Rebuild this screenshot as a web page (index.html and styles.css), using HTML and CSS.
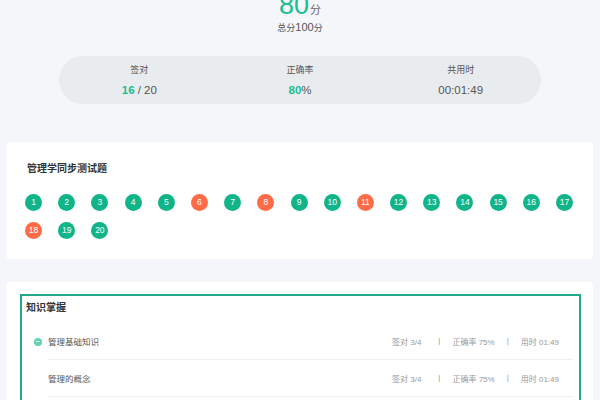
FILE: index.html
```html
<!DOCTYPE html>
<html lang="zh">
<head>
<meta charset="utf-8">
<title>成绩</title>
<link rel="stylesheet" href="styles.css">
</head>
<body>
<div class="head">
  <div class="score"><span class="num">80</span><span class="unit">分</span></div>
  <div class="total"><span class="sm">总分</span>100<span class="sm">分</span></div>
</div>
<div class="pill">
  <div class="stat"><div class="lbl">签对</div><div class="val"><b class="g">16</b> / 20</div></div>
  <div class="stat"><div class="lbl">正确率</div><div class="val"><b class="g">80</b>%</div></div>
  <div class="stat"><div class="lbl">共用时</div><div class="val">00:01:49</div></div>
</div>
<div class="card card-q">
  <div class="title">管理学同步测试题</div>
  <div class="dots">
    <span class="dot">1</span><span class="dot">2</span><span class="dot">3</span><span class="dot">4</span><span class="dot">5</span><span class="dot bad">6</span><span class="dot">7</span><span class="dot bad">8</span><span class="dot">9</span><span class="dot">10</span><span class="dot bad">11</span><span class="dot">12</span><span class="dot">13</span><span class="dot">14</span><span class="dot">15</span><span class="dot">16</span><span class="dot">17</span><span class="dot bad">18</span><span class="dot">19</span><span class="dot">20</span>
  </div>
</div>
<div class="card card-k">
  <div class="box">
    <div class="title k-title">知识掌握</div>
    <div class="row">
      <div class="gut"><span class="minus"></span></div>
      <div class="line"><span class="name">管理基础知识</span><span class="meta"><span>签对 3/4</span><span class="pipe">|</span><span>正确率 75%</span><span class="pipe">|</span><span>用时 01:49</span></span></div>
    </div>
    <div class="row">
      <div class="gut"></div>
      <div class="line"><span class="name">管理的概念</span><span class="meta"><span>签对 3/4</span><span class="pipe">|</span><span>正确率 75%</span><span class="pipe">|</span><span>用时 01:49</span></span></div>
    </div>
  </div>
</div>
</body>
</html>
```
FILE: styles.css
```css
* { box-sizing: border-box; }
html, body { margin: 0; padding: 0; }
body {
  background: #f5f6fa;
  font-family: "Liberation Sans", "Noto Sans CJK SC", sans-serif;
  color: #333;
  overflow: hidden;
}
.head { text-align: center; }
.score {
  margin-top: -8px;
  height: 27px;
  line-height: 27px;
  color: #17bf8f;
}
.score .num { font-size: 27px; }
.score .unit { font-size: 11px; color: #666; margin-left: 1px; }
.total {
  margin-top: 1px;
  font-size: 11px;
  line-height: 14px;
  color: #555;
}
.total .sm { font-size: 9px; }
.pill {
  margin: 21px 59px 0;
  height: 48px;
  border-radius: 24px;
  background: #e9ecef;
  display: flex;
  padding: 8px 0 7px;
}
.stat { flex: 1; text-align: center; }
.lbl { font-size: 9px; line-height: 12px; color: #555; }
.val { margin-top: 7px; font-size: 11.5px; line-height: 14px; color: #555; }
.val .g { color: #17bf8f; font-weight: bold; }
.card {
  background: #fff;
  border-radius: 4px;
  margin: 0 7px 0 6px;
}
.card-q { margin-top: 38px; padding: 20px 19px 20px; }
.title { font-size: 10px; line-height: 14px; font-weight: bold; color: #333; }
.card-q .title { margin-left: 2px; }
.dots {
  margin-top: 18px;
  display: flex;
  flex-wrap: wrap;
  column-gap: 16.2px;
  row-gap: 11px;
}
.dot {
  width: 17px;
  height: 17px;
  border-radius: 50%;
  background: #10b489;
  color: #fff;
  font-size: 8.5px;
  line-height: 17px;
  text-align: center;
}
.dot.bad { background: #ff6b47; }
.card-k { margin-top: 23px; padding: 12px 12px 0 14px; }
.box {
  border: 2px solid #23a889;
  border-bottom: none;
  padding: 5px 6px 30px 4px;
}
.k-title { margin-bottom: 8px; }
.row { display: flex; margin-left: -4px; }
.gut {
  width: 26px;
  flex: none;
  display: flex;
  align-items: center;
  justify-content: center;
  padding-left: 5px;
}
.minus {
  width: 8px;
  height: 8px;
  border-radius: 50%;
  background: #5fd4b0;
  position: relative;
  display: block;
}
.minus::after {
  content: "";
  position: absolute;
  left: 2px;
  top: 3.5px;
  width: 4px;
  height: 1px;
  background: #fff;
}
.line {
  flex: 1;
  display: flex;
  justify-content: space-between;
  align-items: center;
  height: 37px;
  border-bottom: 1px solid #f0f0f0;
  padding-right: 14px;
}
.name { font-size: 8.5px; color: #555; }
.meta { display: flex; font-size: 8px; color: #999; }
.meta span:first-child { margin-right: 5px; }
.pipe { margin: 0 12px; }
```
